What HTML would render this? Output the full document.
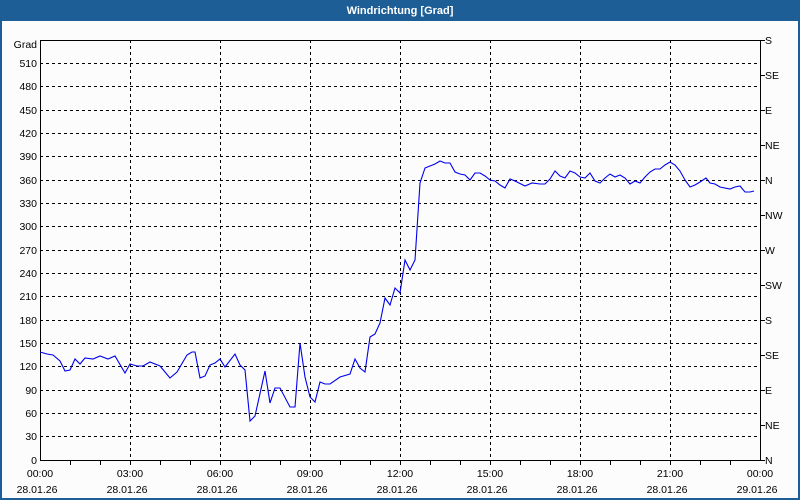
<!DOCTYPE html>
<html><head><meta charset="utf-8"><style>
html,body{margin:0;padding:0;width:800px;height:500px;overflow:hidden;background:#fcfcfc}
svg{display:block}
text{font-family:"Liberation Sans",sans-serif;font-size:10.5px;fill:#000}
</style></head><body>
<svg width="800" height="500" xmlns="http://www.w3.org/2000/svg">
<rect x="0" y="0" width="800" height="500" fill="#1d5e97"/>
<rect x="2" y="21" width="796" height="477" fill="#fcfcfc"/>
<text x="400" y="14" text-anchor="middle" style="font-weight:bold;fill:#fff;font-size:11px">Windrichtung [Grad]</text>
<g stroke="#000" stroke-width="1" stroke-dasharray="3,3" shape-rendering="crispEdges">
<line x1="40" y1="63.5" x2="760" y2="63.5"/><line x1="40" y1="86.5" x2="760" y2="86.5"/><line x1="40" y1="110.5" x2="760" y2="110.5"/><line x1="40" y1="133.5" x2="760" y2="133.5"/><line x1="40" y1="156.5" x2="760" y2="156.5"/><line x1="40" y1="180.5" x2="760" y2="180.5"/><line x1="40" y1="203.5" x2="760" y2="203.5"/><line x1="40" y1="226.5" x2="760" y2="226.5"/><line x1="40" y1="250.5" x2="760" y2="250.5"/><line x1="40" y1="273.5" x2="760" y2="273.5"/><line x1="40" y1="296.5" x2="760" y2="296.5"/><line x1="40" y1="320.5" x2="760" y2="320.5"/><line x1="40" y1="343.5" x2="760" y2="343.5"/><line x1="40" y1="366.5" x2="760" y2="366.5"/><line x1="40" y1="390.5" x2="760" y2="390.5"/><line x1="40" y1="413.5" x2="760" y2="413.5"/><line x1="40" y1="436.5" x2="760" y2="436.5"/>
<line x1="130.5" y1="40" x2="130.5" y2="460"/><line x1="220.5" y1="40" x2="220.5" y2="460"/><line x1="310.5" y1="40" x2="310.5" y2="460"/><line x1="400.5" y1="40" x2="400.5" y2="460"/><line x1="490.5" y1="40" x2="490.5" y2="460"/><line x1="580.5" y1="40" x2="580.5" y2="460"/><line x1="670.5" y1="40" x2="670.5" y2="460"/>
</g>
<g stroke="#000" stroke-width="1" fill="none" shape-rendering="crispEdges">
<path d="M40.5 40.5H760.5V460.5H40.5Z"/>
<path d="M70.5 460v5M100.5 460v5M130.5 460v5M160.5 460v5M190.5 460v5M220.5 460v5M250.5 460v5M280.5 460v5M310.5 460v5M340.5 460v5M370.5 460v5M400.5 460v5M430.5 460v5M460.5 460v5M490.5 460v5M520.5 460v5M550.5 460v5M580.5 460v5M610.5 460v5M640.5 460v5M670.5 460v5M700.5 460v5M730.5 460v5"/>
<path d="M760 40.5h5M760 75.5h5M760 110.5h5M760 145.5h5M760 180.5h5M760 215.5h5M760 250.5h5M760 285.5h5M760 320.5h5M760 355.5h5M760 390.5h5M760 425.5h5M760 460.5h5"/>
</g>
<polyline fill="none" stroke="#0000ee" stroke-width="1.1" points="40,352 47,354 53,355 60,361 65,371 70,370 75,359 80,364 85,358 93,359 100,356 108,359 115,356 125,373 130,364 137,366 143,366 150,362 160,366 170,378 177,372 187,355 192,352 195,352 200,378 205,376 210,365 215,363 220,359 225,367 235,354 240,365 245,370 250,421 255,416 265,371 270,403 275,388 280,388 290,407 295,407 300,343 305,377 310,397 315,402 320,382 325,384 330,384 340,377 350,374 355,359 360,368 365,372 370,337 375,334 380,323 385,298 390,305 395,288 400,293 405,260 410,270 415,260 420,183 425,168 430,166 435,164 440,161 445,163 450,163 455,172 460,174 465,175 470,180 475,173 480,173 485,176 490,180 495,181 500,185 505,188 510,179 515,181 525,186 532,183 540,184 545,184 550,179 555,171 560,176 565,178 570,171 575,173 580,177 585,178 590,173 595,181 600,183 605,178 610,174 615,177 620,175 625,178 630,184 635,181 640,183 645,177 650,172 655,169 660,169 665,165 670,162 675,165 680,171 685,180 690,187 695,185 700,182 706,178 710,183 715,184 720,187 730,189 735,187 740,186 745,192 750,192 754,191"/>
<g text-anchor="end">
<text x="37" y="48">Grad</text>
<text x="37" y="67">510</text><text x="37" y="90">480</text><text x="37" y="114">450</text><text x="37" y="137">420</text><text x="37" y="160">390</text><text x="37" y="184">360</text><text x="37" y="207">330</text><text x="37" y="230">300</text><text x="37" y="254">270</text><text x="37" y="277">240</text><text x="37" y="300">210</text><text x="37" y="324">180</text><text x="37" y="347">150</text><text x="37" y="370">120</text><text x="37" y="394">90</text><text x="37" y="417">60</text><text x="37" y="440">30</text><text x="37" y="464">0</text>
</g>
<g>
<text x="765" y="44">S</text><text x="765" y="79">SE</text><text x="765" y="114">E</text><text x="765" y="149">NE</text><text x="765" y="184">N</text><text x="765" y="219">NW</text><text x="765" y="254">W</text><text x="765" y="289">SW</text><text x="765" y="324">S</text><text x="765" y="359">SE</text><text x="765" y="394">E</text><text x="765" y="429">NE</text><text x="765" y="464">N</text>
</g>
<g text-anchor="middle">
<text x="40" y="477">00:00</text><text x="130" y="477">03:00</text><text x="220" y="477">06:00</text><text x="310" y="477">09:00</text><text x="400" y="477">12:00</text><text x="490" y="477">15:00</text><text x="580" y="477">18:00</text><text x="670" y="477">21:00</text><text x="760" y="477">00:00</text>
<text x="37" y="493">28.01.26</text><text x="127" y="493">28.01.26</text><text x="217" y="493">28.01.26</text><text x="307" y="493">28.01.26</text><text x="397" y="493">28.01.26</text><text x="487" y="493">28.01.26</text><text x="577" y="493">28.01.26</text><text x="667" y="493">28.01.26</text><text x="757" y="493">29.01.26</text>
</g>
</svg>
</body></html>
